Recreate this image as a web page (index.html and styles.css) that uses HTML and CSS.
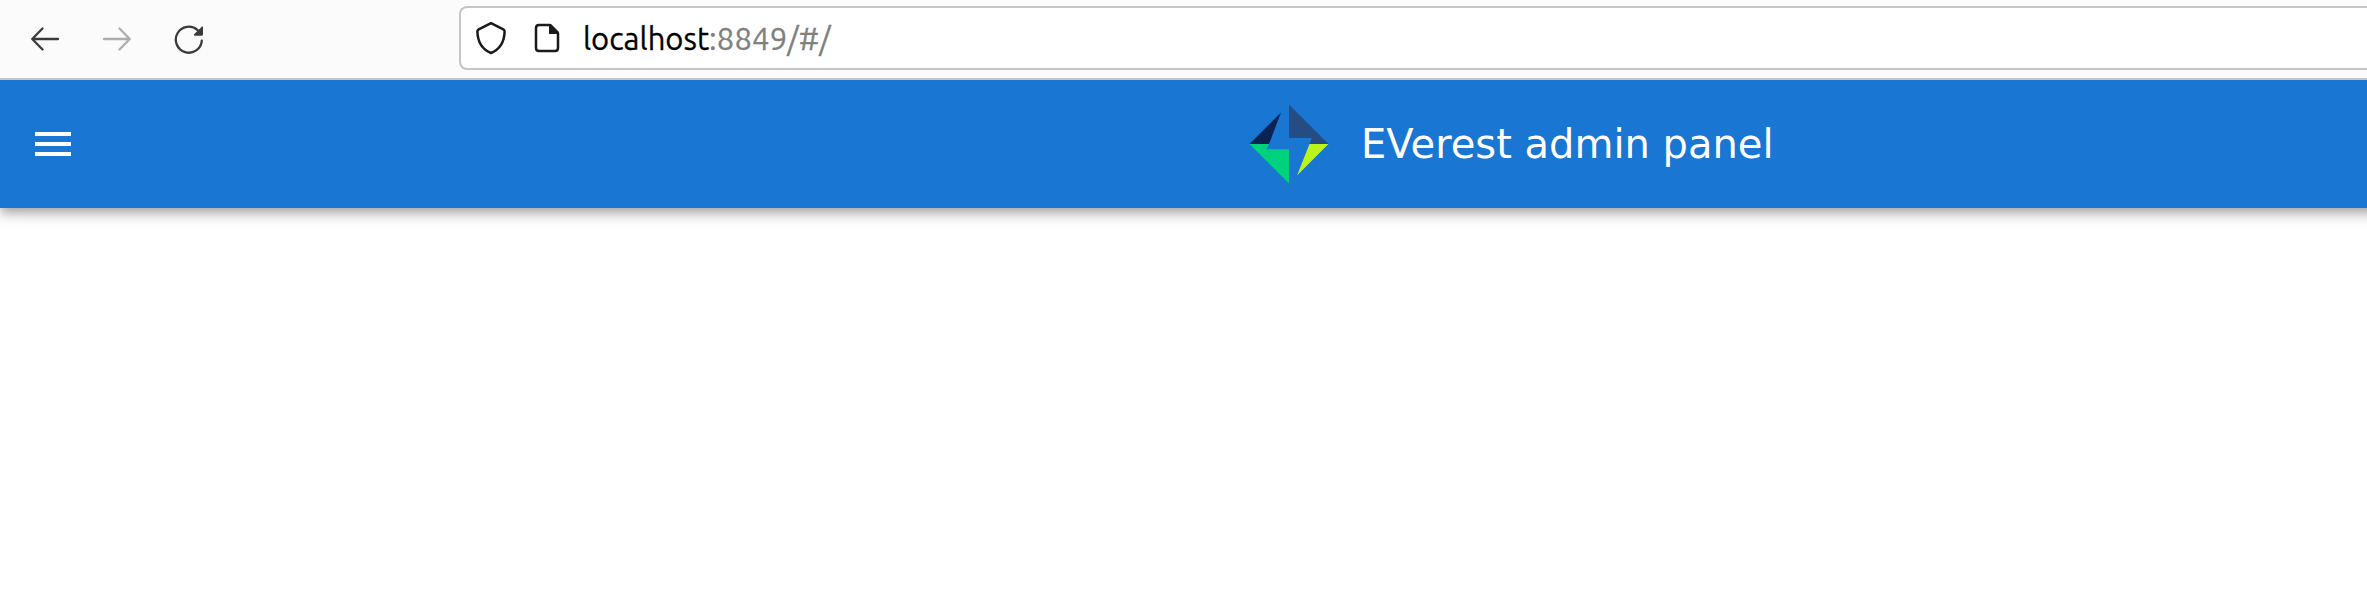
FILE: index.html
```
<!DOCTYPE html>
<html lang="en">
<head>
<meta charset="utf-8">
<title>EVerest admin panel</title>
<link rel="stylesheet" href="styles.css">
</head>
<body>
<div class="browser">
  <nav class="nav">
    <svg class="nav-icon" viewBox="0 0 32 32"><path d="M29 16H3.500M13.500 5.500L3.200 16l10.300 10.500"/></svg>
    <svg class="nav-icon disabled" viewBox="0 0 32 32"><path d="M3 16h25.500M18.500 5.500L28.800 16l-10.300 10.500"/></svg>
    <svg class="nav-icon" viewBox="0 0 32 32"><path d="M28.800 17.600A13 13 0 1 1 24.600 7.100"/><path class="solid" d="M30 4v7.600q0 1.100-1.100 1.100h-7.400q-1.200-.5-.4-1.400l7.900-7.800q.8-.5 1 .5z"/></svg>
  </nav>
  <div class="address">
    <svg class="shield" viewBox="0 0 32 34"><path d="M16 2.100L28.300 8.400Q29.700 9.200 29.600 10.700C29.300 20 25.500 28 16 32 6.500 28 2.700 20 2.400 10.700Q2.300 9.200 3.700 8.400Z"/></svg>
    <svg class="page" viewBox="0 0 26 30"><path d="M5 2h10.500l8.500 8.500V25q0 3-3 3H5q-3 0-3-3V5q0-3 3-3z"/><path class="solid" d="M15 1h2l8 8v2H15z"/></svg>
    <div class="url"><span class="host">localhost</span><span class="path">:8849/#/</span></div>
  </div>
</div>
<header class="appbar">
  <div class="menu"><i></i><i></i><i></i></div>
  <div class="brand">
    <svg class="logo" viewBox="0 0 80 80">
      <path fill="#0b2352" d="M.5 40L32 8.500 20 40z"/>
      <path fill="#264c84" d="M40 .5L79.500 40H60.500L62.800 34H40z"/>
      <path fill="#00d17f" d="M.5 40h19.500L17.500 45.300H40V79.500z"/>
      <path fill="#b9f51b" d="M60.500 40H79.500L48 71.500z"/>
    </svg>
    <h1 class="title">EVerest admin panel</h1>
  </div>
</header>
<main class="content"></main>
</body>
</html>
```
FILE: styles.css
```
* { box-sizing: border-box; }
body {
  margin: 0;
  height: 594px;
  overflow: hidden;
  background: #fff;
}
.browser {
  position: relative;
  z-index: 1;
  display: flex;
  height: 80px;
  padding-top: 6px;
  background: #fbfbfb;
  border-bottom: 2px solid #c5c5c5;
}
.nav {
  display: flex;
  gap: 40px;
  width: 459px;
  padding: 17px 0 0 29px;
}
.nav-icon {
  width: 32px;
  height: 32px;
  fill: none;
  stroke: #3b3b3b;
  stroke-width: 2.3;
  stroke-linecap: round;
  stroke-linejoin: round;
}
.nav-icon.disabled { stroke: #adadad; }
.nav-icon .solid { fill: #3b3b3b; stroke: none; }
.address {
  display: flex;
  align-items: flex-start;
  flex: 1;
  height: 64px;
  padding-left: 14px;
  background: #fff;
  border: 2px solid #c5c5c5;
  border-right: 0;
  border-radius: 8px 0 0 8px;
}
.shield, .page {
  fill: none;
  stroke: #1a1a1a;
  stroke-width: 2.5;
  stroke-linejoin: round;
}
.shield { width: 32px; height: 34px; margin-top: 13px; }
.page { width: 26px; height: 30px; margin: 15px 0 0 27px; }
.page .solid { fill: #1a1a1a; stroke: none; }
.url {
  margin: 10px 0 0 23px;
  font: 31px/42px "Ubuntu", "Noto Sans", sans-serif;
  white-space: nowrap;
}
.host { color: #000; -webkit-text-stroke: .3px #000; }
.path { color: #808080; letter-spacing: .12px; -webkit-text-stroke: .3px #808080; }
.appbar {
  display: grid;
  grid-template-columns: 1249px 1fr;
  align-items: center;
  height: 128px;
  margin-right: -24px;
  background: #1976d2;
  box-shadow: 0 4px 8px -2px rgba(0,0,0,.2), 0 8px 10px 0 rgba(0,0,0,.14), 0 2px 20px 0 rgba(0,0,0,.12);
}
.menu {
  display: flex;
  flex-direction: column;
  gap: 6px;
  width: 36px;
  margin-left: 35px;
}
.menu i { height: 4px; background: #fff; }
.brand { display: flex; align-items: center; }
.logo { width: 80px; height: 80px; }
.title {
  margin: 0 0 0 32px;
  color: #fff;
  font: 400 40px/60px "DejaVu Sans", sans-serif;
  white-space: nowrap;
}
```
